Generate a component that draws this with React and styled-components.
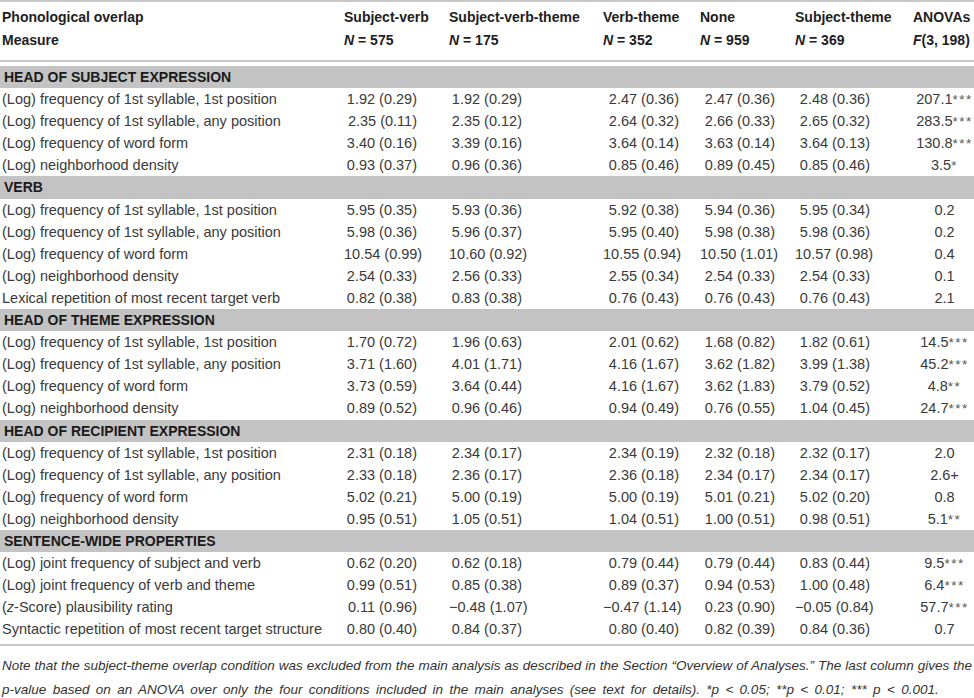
import React from "react";
import styled, { createGlobalStyle } from "styled-components";

const Global = createGlobalStyle`
  html, body { margin: 0; padding: 0; background: #ffffff; }
  body { font-family: "Liberation Sans", Arial, sans-serif; color: #333; }
`;

const COLS = "344px 105px 154px 97px 95px 118px 1fr";
const VALUE_PAD = [32, 81, 21, 20, 43];

const Page = styled.div`
  width: 974px;
  display: flex;
  flex-direction: column;
`;

const Rule = styled.div`
  height: 2px;
  background: #c9c9c9;
  margin: ${(p) => p.$margin || "0"};
`;

const HeadGrid = styled.div`
  display: grid;
  grid-template-columns: ${COLS};
  grid-auto-rows: 23px;
  padding: 4px 0 8px;
`;

const HeadCell = styled.div`
  font-size: 14px;
  font-weight: bold;
  color: #1e1e1e;
  line-height: 23px;
  white-space: nowrap;
  padding-left: ${(p) => (p.$first ? "2px" : "0")};
`;

const Body = styled.div`
  display: flex;
  flex-direction: column;
  padding-top: 4px;
`;

const Band = styled.div`
  height: 22.1px;
  line-height: 22px;
  background: #c3c3c3;
  font-size: 14px;
  font-weight: bold;
  color: #1a1a1a;
  padding-left: 4px;
  white-space: nowrap;
`;

const Row = styled.div`
  display: grid;
  grid-template-columns: ${COLS};
  height: 22.1px;
  line-height: 22px;
  font-size: 14.5px;
  color: #3a3a3a;
`;

const Label = styled.div`
  padding-left: 2px;
  white-space: nowrap;
`;

const Value = styled.div`
  text-align: right;
  padding-right: ${(p) => p.$pad}px;
  white-space: nowrap;
`;

const Stat = styled.div`
  text-align: center;
  white-space: nowrap;
  padding-left: 2px;
`;

const Stars = styled.span`
  letter-spacing: 1.5px;
  font-size: 13.5px;
  color: #555;
`;

const Note = styled.div`
  padding: 8px 2px 0;
  font-style: italic;
  font-size: 13.5px;
  line-height: 24px;
  color: #333;
  display: flex;
  flex-direction: column;
`;

const NoteLine = styled.span`
  display: block;
  white-space: nowrap;
  text-align: ${(p) => (p.$justify ? "justify" : "left")};
  text-align-last: ${(p) => (p.$justify ? "justify" : "left")};
  word-spacing: ${(p) => (p.$justify ? "0" : "2.6px")};
`;

const Ital = styled.i`
  font-style: italic;
`;

const data = [
  {
    title: "HEAD OF SUBJECT EXPRESSION",
    rows: [
      ["(Log) frequency of 1st syllable, 1st position", "1.92 (0.29)", "1.92 (0.29)", "2.47 (0.36)", "2.47 (0.36)", "2.48 (0.36)", "207.1", "***"],
      ["(Log) frequency of 1st syllable, any position", "2.35 (0.11)", "2.35 (0.12)", "2.64 (0.32)", "2.66 (0.33)", "2.65 (0.32)", "283.5", "***"],
      ["(Log) frequency of word form", "3.40 (0.16)", "3.39 (0.16)", "3.64 (0.14)", "3.63 (0.14)", "3.64 (0.13)", "130.8", "***"],
      ["(Log) neighborhood density", "0.93 (0.37)", "0.96 (0.36)", "0.85 (0.46)", "0.89 (0.45)", "0.85 (0.46)", "3.5", "*"],
    ],
  },
  {
    title: "VERB",
    rows: [
      ["(Log) frequency of 1st syllable, 1st position", "5.95 (0.35)", "5.93 (0.36)", "5.92 (0.38)", "5.94 (0.36)", "5.95 (0.34)", "0.2", ""],
      ["(Log) frequency of 1st syllable, any position", "5.98 (0.36)", "5.96 (0.37)", "5.95 (0.40)", "5.98 (0.38)", "5.98 (0.36)", "0.2", ""],
      ["(Log) frequency of word form", "10.54 (0.99)", "10.60 (0.92)", "10.55 (0.94)", "10.50 (1.01)", "10.57 (0.98)", "0.4", ""],
      ["(Log) neighborhood density", "2.54 (0.33)", "2.56 (0.33)", "2.55 (0.34)", "2.54 (0.33)", "2.54 (0.33)", "0.1", ""],
      ["Lexical repetition of most recent target verb", "0.82 (0.38)", "0.83 (0.38)", "0.76 (0.43)", "0.76 (0.43)", "0.76 (0.43)", "2.1", ""],
    ],
  },
  {
    title: "HEAD OF THEME EXPRESSION",
    rows: [
      ["(Log) frequency of 1st syllable, 1st position", "1.70 (0.72)", "1.96 (0.63)", "2.01 (0.62)", "1.68 (0.82)", "1.82 (0.61)", "14.5", "***"],
      ["(Log) frequency of 1st syllable, any position", "3.71 (1.60)", "4.01 (1.71)", "4.16 (1.67)", "3.62 (1.82)", "3.99 (1.38)", "45.2", "***"],
      ["(Log) frequency of word form", "3.73 (0.59)", "3.64 (0.44)", "4.16 (1.67)", "3.62 (1.83)", "3.79 (0.52)", "4.8", "**"],
      ["(Log) neighborhood density", "0.89 (0.52)", "0.96 (0.46)", "0.94 (0.49)", "0.76 (0.55)", "1.04 (0.45)", "24.7", "***"],
    ],
  },
  {
    title: "HEAD OF RECIPIENT EXPRESSION",
    rows: [
      ["(Log) frequency of 1st syllable, 1st position", "2.31 (0.18)", "2.34 (0.17)", "2.34 (0.19)", "2.32 (0.18)", "2.32 (0.17)", "2.0", ""],
      ["(Log) frequency of 1st syllable, any position", "2.33 (0.18)", "2.36 (0.17)", "2.36 (0.18)", "2.34 (0.17)", "2.34 (0.17)", "2.6+", ""],
      ["(Log) frequency of word form", "5.02 (0.21)", "5.00 (0.19)", "5.00 (0.19)", "5.01 (0.21)", "5.02 (0.20)", "0.8", ""],
      ["(Log) neighborhood density", "0.95 (0.51)", "1.05 (0.51)", "1.04 (0.51)", "1.00 (0.51)", "0.98 (0.51)", "5.1", "**"],
    ],
  },
  {
    title: "SENTENCE-WIDE PROPERTIES",
    rows: [
      ["(Log) joint frequency of subject and verb", "0.62 (0.20)", "0.62 (0.18)", "0.79 (0.44)", "0.79 (0.44)", "0.83 (0.44)", "9.5", "***"],
      ["(Log) joint frequency of verb and theme", "0.99 (0.51)", "0.85 (0.38)", "0.89 (0.37)", "0.94 (0.53)", "1.00 (0.48)", "6.4", "***"],
      [
        <>
          (<Ital>z</Ital>-Score) plausibility rating
        </>,
        "0.11 (0.96)", "\u22120.48 (1.07)", "\u22120.47 (1.14)", "0.23 (0.90)", "\u22120.05 (0.84)", "57.7", "***",
      ],
      ["Syntactic repetition of most recent target structure", "0.80 (0.40)", "0.84 (0.37)", "0.80 (0.40)", "0.82 (0.39)", "0.84 (0.36)", "0.7", ""],
    ],
  },
];

const headers = ["Subject-verb", "Subject-verb-theme", "Verb-theme", "None", "Subject-theme", "ANOVAs"];
const counts = ["575", "175", "352", "959", "369"];

const NEq = ({ n }) => (
  <>
    <Ital>N</Ital>
    {" = "}
    {n}
  </>
);

export default function App() {
  return (
    <>
      <Global />
      <Page>
        <Rule />
        <HeadGrid>
          <HeadCell $first>Phonological overlap</HeadCell>
          {headers.map((h) => (
            <HeadCell key={h}>{h}</HeadCell>
          ))}
          <HeadCell $first>Measure</HeadCell>
          {counts.map((c) => (
            <HeadCell key={c}>
              <NEq n={c} />
            </HeadCell>
          ))}
          <HeadCell>
            <Ital>F</Ital>(3, 198)
          </HeadCell>
        </HeadGrid>
        <Rule />
        <Body>
          {data.map((sec) => (
            <React.Fragment key={sec.title}>
              <Band>{sec.title}</Band>
              {sec.rows.map((r, i) => (
                <Row key={i}>
                  <Label>{r[0]}</Label>
                  {r.slice(1, 6).map((v, j) => (
                    <Value key={j} $pad={VALUE_PAD[j]}>
                      {v}
                    </Value>
                  ))}
                  <Stat>
                    {r[6]}
                    {r[7] && <Stars>{r[7]}</Stars>}
                  </Stat>
                </Row>
              ))}
            </React.Fragment>
          ))}
        </Body>
        <Rule $margin="4px 0 0" />
        <Note>
          <NoteLine $justify>
            Note that the subject-theme overlap condition was excluded from the main analysis as described in the
            Section “Overview of Analyses.” The last column gives the
          </NoteLine>
          <NoteLine>
            p-value based on an ANOVA over only the four conditions included in the main analyses (see text for
            details). *p &lt; 0.05; **p &lt; 0.01; *** p &lt; 0.001.
          </NoteLine>
        </Note>
      </Page>
    </>
  );
}
